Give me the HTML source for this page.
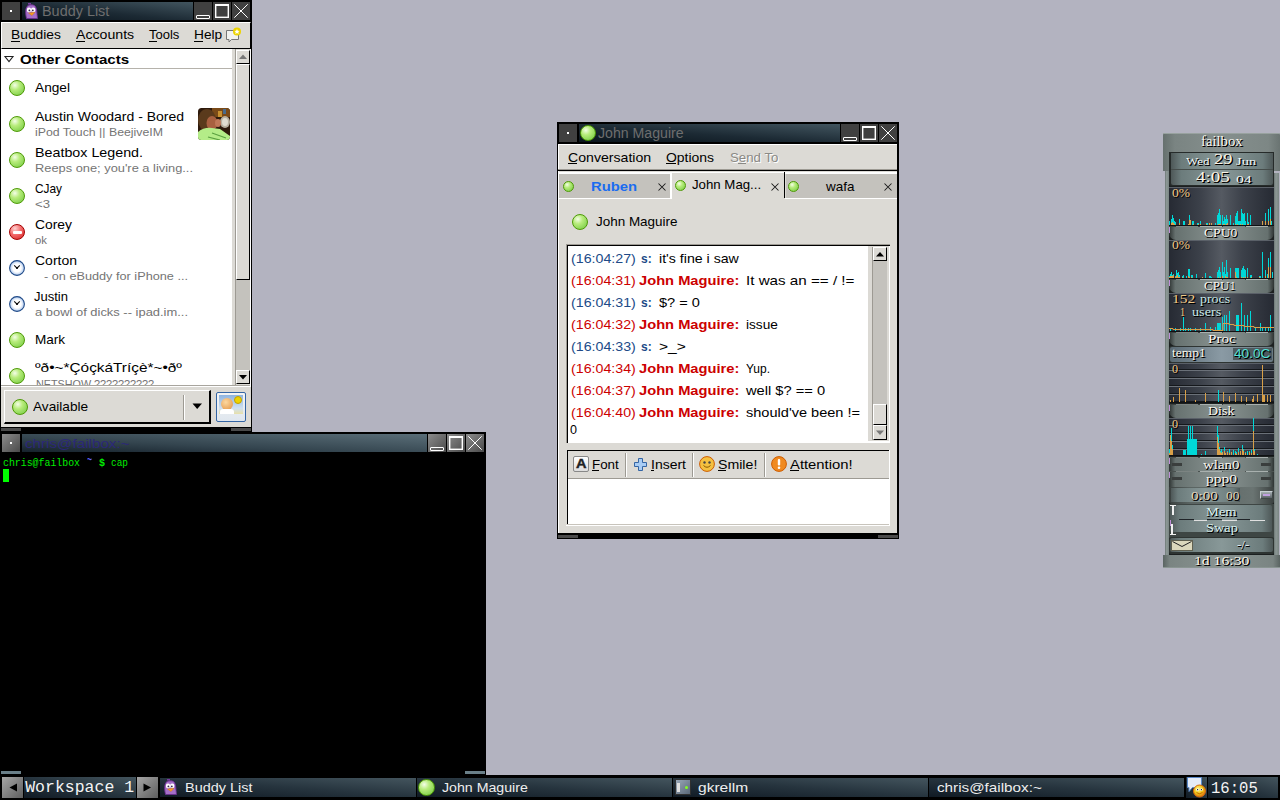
<!DOCTYPE html>
<html><head><meta charset="utf-8"><title>Desktop</title>
<style>
html,body{margin:0;padding:0;width:1280px;height:800px;overflow:hidden;background:#b3b3c0}
.r,.t{position:absolute;margin:0;padding:0}
.t{white-space:pre;transform-origin:0 0;font-family:"Liberation Sans",sans-serif}
svg.r{overflow:visible}
</style></head><body>
<div class="r" style="left:0px;top:0px;width:1280px;height:800px;background:#b3b3c0;"></div>
<div class="r" style="left:0px;top:0px;width:252px;height:432px;background:#000;"></div>
<div class="r" style="left:2px;top:2px;width:18px;height:18px;background:#404040;"></div><div class="r" style="left:10px;top:10px;width:2px;height:2px;background:#fff;"></div><div class="r" style="left:22px;top:2px;width:171px;height:18px;background:linear-gradient(to top right,#0a141c 0%,#1c2a34 45%,#42555f 100%);"></div><div class="r" style="left:194px;top:2px;width:18px;height:18px;background:#404040;"></div><div class="r" style="left:213px;top:2px;width:18px;height:18px;background:#404040;"></div><div class="r" style="left:232px;top:2px;width:18px;height:18px;background:#404040;"></div><div class="r" style="left:196px;top:15px;width:14px;height:4px;background:transparent;border:1px solid #fff;box-sizing:border-box;border-radius:1px"></div><svg class="r" style="left:213px;top:2px" width="18" height="18"><rect x="2.7" y="3" width="12.6" height="12.3" fill="none" stroke="#fff" stroke-width="1.4"/><rect x="2" y="2" width="14" height="2" fill="#fff"/></svg><svg class="r" style="left:232px;top:2px" width="18" height="18"><path d="M2.3 2.3L15.7 15.7M15.7 2.3L2.3 15.7" stroke="#fff" stroke-width="1"/></svg>
<svg class="r" style="left:24px;top:3px" width="14" height="16" viewBox="0 0 14 16"><path d="M2.5 15.5 C1.5 11 1.2 6 3 3.5 C4.5 1.5 9.5 1.2 11.3 3.3 C13 5.5 12.8 10 13.5 15.5 Z" fill="#a56fc8" stroke="#6a3090" stroke-width=".9"/><rect x="4" y="0" width="3" height="1.5" fill="#7a3aa0"/><ellipse cx="5" cy="7" rx="2.2" ry="2.4" fill="#fff"/><ellipse cx="9.2" cy="7" rx="2.2" ry="2.4" fill="#fff"/><circle cx="5.4" cy="7.4" r=".9" fill="#3a2a4a"/><circle cx="8.8" cy="7.4" r=".9" fill="#3a2a4a"/><path d="M4.5 10 L11 9.3 L8 12.5Z" fill="#f5a020" stroke="#d07000" stroke-width=".4"/></svg>
<div class="t" style="left:41.70px;top:4.15px;font:14.00px/14.00px 'Liberation Sans', sans-serif;color:#6e6e6e;transform:scale(1.0298,1.0000);">Buddy List</div>
<div class="r" style="left:1px;top:22px;width:250px;height:405px;background:#dcdad5;"></div>
<div class="r" style="left:1px;top:22px;width:250px;height:27px;background:#dcdad5;border-top:1px solid #fff;border-left:1px solid #fff;border-right:1px solid #000;border-bottom:1px solid #000;box-sizing:border-box"></div>
<div class="r" style="left:1px;top:49px;width:1px;height:378px;background:#fff;"></div>
<div class="t" style="left:11.40px;top:28.30px;font:13.00px/13.00px 'Liberation Sans', sans-serif;color:#000;transform:scale(1.0638,1.0000);">Buddies</div>
<div class="t" style="left:76.30px;top:28.30px;font:13.00px/13.00px 'Liberation Sans', sans-serif;color:#000;transform:scale(1.0870,1.0000);">Accounts</div>
<div class="t" style="left:149.00px;top:28.30px;font:13.00px/13.00px 'Liberation Sans', sans-serif;color:#000;">Tools</div>
<div class="t" style="left:194.00px;top:28.30px;font:13.00px/13.00px 'Liberation Sans', sans-serif;color:#000;transform:scale(1.0542,1.0000);">Help</div>
<div class="r" style="left:11px;top:41px;width:9px;height:1px;background:#000;"></div>
<div class="r" style="left:76px;top:41px;width:9px;height:1px;background:#000;"></div>
<div class="r" style="left:149px;top:41px;width:8px;height:1px;background:#000;"></div>
<div class="r" style="left:194px;top:41px;width:9px;height:1px;background:#000;"></div>
<svg class="r" style="left:225px;top:27px" width="17" height="16" viewBox="0 0 17 16"><path d="M1.5 3.5 h12 v9 h-7 l-2.5 2.5 v-2.5 h-2.5z" fill="#f2f2f0" stroke="#777" stroke-width="1"/><circle cx="12" cy="4.5" r="4" fill="#edd400"/><path d="M12 2 l.8 1.7 1.8.2-1.3 1.2.4 1.8-1.7-.9-1.7.9.4-1.8-1.3-1.2 1.8-.2z" fill="#fff"/></svg>
<div class="r" style="left:1px;top:49px;width:231px;height:336px;background:#fff;"></div>
<div class="r" style="left:1px;top:68px;width:231px;height:1px;background:#b5b2ab;"></div>
<svg class="r" style="left:4px;top:55px" width="10" height="8"><path d="M1 1.5 H9 L5 6.5Z" fill="none" stroke="#222" stroke-width="1.1"/></svg>
<div class="t" style="left:19.80px;top:52.50px;font:bold 13.00px/13.00px 'Liberation Sans', sans-serif;color:#000;transform:scale(1.1629,1.0000);">Other Contacts</div>
<div class="r" style="left:9px;top:80px;width:16px;height:16px;border-radius:50%;box-sizing:border-box;border:1px solid #4e9a06;background:radial-gradient(circle at 35% 30%,#f4fde8 0%,#b8ec7c 35%,#8ad554 75%,#73c23c 100%)"></div>
<div class="t" style="left:35.00px;top:81.00px;font:13.00px/13.00px 'Liberation Sans', sans-serif;color:#000;transform:scale(1.0526,1.0000);">Angel</div>
<div class="r" style="left:9px;top:116px;width:16px;height:16px;border-radius:50%;box-sizing:border-box;border:1px solid #4e9a06;background:radial-gradient(circle at 35% 30%,#f4fde8 0%,#b8ec7c 35%,#8ad554 75%,#73c23c 100%)"></div>
<div class="t" style="left:35.00px;top:109.90px;font:13.00px/13.00px 'Liberation Sans', sans-serif;color:#000;transform:scale(1.0758,1.0000);">Austin Woodard - Bored</div>
<div class="t" style="left:35.00px;top:126.69px;font:11.00px/11.00px 'Liberation Sans', sans-serif;color:#747474;transform:scale(1.1194,1.0000);">iPod Touch || BeejiveIM</div>
<div class="r" style="left:9px;top:152px;width:16px;height:16px;border-radius:50%;box-sizing:border-box;border:1px solid #4e9a06;background:radial-gradient(circle at 35% 30%,#f4fde8 0%,#b8ec7c 35%,#8ad554 75%,#73c23c 100%)"></div>
<div class="t" style="left:35.00px;top:145.60px;font:13.00px/13.00px 'Liberation Sans', sans-serif;color:#000;transform:scale(1.0987,1.0000);">Beatbox Legend.</div>
<div class="t" style="left:35.00px;top:162.69px;font:11.00px/11.00px 'Liberation Sans', sans-serif;color:#747474;transform:scale(1.1669,1.0000);">Reeps one; you&#x27;re a living...</div>
<div class="r" style="left:9px;top:188px;width:16px;height:16px;border-radius:50%;box-sizing:border-box;border:1px solid #4e9a06;background:radial-gradient(circle at 35% 30%,#f4fde8 0%,#b8ec7c 35%,#8ad554 75%,#73c23c 100%)"></div>
<div class="t" style="left:35.00px;top:182.00px;font:13.00px/13.00px 'Liberation Sans', sans-serif;color:#000;transform:scale(0.9122,1.0000);">CJay</div>
<div class="t" style="left:35.00px;top:198.69px;font:11.00px/11.00px 'Liberation Sans', sans-serif;color:#747474;transform:scale(1.1952,1.0000);">&lt;3</div>
<div class="r" style="left:9px;top:224px;width:16px;height:16px;border-radius:50%;box-sizing:border-box;border:1px solid #a40000;background:radial-gradient(circle at 35% 25%,#ffd0d0 0%,#f26a6a 45%,#e03a3a 80%,#c82020 100%)"></div>
<div class="r" style="left:12.5px;top:231px;width:9.5px;height:2.5px;background:#fff;border-radius:1px"></div>
<div class="t" style="left:35.00px;top:218.00px;font:13.00px/13.00px 'Liberation Sans', sans-serif;color:#000;transform:scale(1.0663,1.0000);">Corey</div>
<div class="t" style="left:35.00px;top:234.69px;font:11.00px/11.00px 'Liberation Sans', sans-serif;color:#747474;transform:scale(1.0300,1.0000);">ok</div>
<svg class="r" style="left:9px;top:260px" width="16" height="16"><defs><radialGradient id="cf260" cx="50%" cy="50%" r="50%"><stop offset="55%" stop-color="#fff"/><stop offset="100%" stop-color="#a8c4ec"/></radialGradient></defs><circle cx="8" cy="8" r="7.4" fill="url(#cf260)" stroke="#204a87" stroke-width="1.1"/><path d="M5.2 5.3 L8 8.2 L10.8 5.3" fill="none" stroke="#111" stroke-width="1.1"/><circle cx="8" cy="8" r="1" fill="#000"/></svg>
<div class="t" style="left:35.00px;top:253.60px;font:13.00px/13.00px 'Liberation Sans', sans-serif;color:#000;transform:scale(1.0769,1.0000);">Corton</div>
<div class="t" style="left:44.00px;top:270.69px;font:11.00px/11.00px 'Liberation Sans', sans-serif;color:#747474;transform:scale(1.1543,1.0000);">- on eBuddy for iPhone ...</div>
<svg class="r" style="left:9px;top:296px" width="16" height="16"><defs><radialGradient id="cf296" cx="50%" cy="50%" r="50%"><stop offset="55%" stop-color="#fff"/><stop offset="100%" stop-color="#a8c4ec"/></radialGradient></defs><circle cx="8" cy="8" r="7.4" fill="url(#cf296)" stroke="#204a87" stroke-width="1.1"/><path d="M5.2 5.3 L8 8.2 L10.8 5.3" fill="none" stroke="#111" stroke-width="1.1"/><circle cx="8" cy="8" r="1" fill="#000"/></svg>
<div class="t" style="left:34.00px;top:289.60px;font:13.00px/13.00px 'Liberation Sans', sans-serif;color:#000;">Justin</div>
<div class="t" style="left:35.00px;top:306.69px;font:11.00px/11.00px 'Liberation Sans', sans-serif;color:#747474;transform:scale(1.1751,1.0000);">a bowl of dicks -- ipad.im...</div>
<div class="r" style="left:9px;top:332px;width:16px;height:16px;border-radius:50%;box-sizing:border-box;border:1px solid #4e9a06;background:radial-gradient(circle at 35% 30%,#f4fde8 0%,#b8ec7c 35%,#8ad554 75%,#73c23c 100%)"></div>
<div class="t" style="left:35.00px;top:332.60px;font:13.00px/13.00px 'Liberation Sans', sans-serif;color:#000;transform:scale(1.0432,1.0000);">Mark</div>
<div class="r" style="left:9px;top:368px;width:16px;height:16px;border-radius:50%;box-sizing:border-box;border:1px solid #4e9a06;background:radial-gradient(circle at 35% 30%,#f4fde8 0%,#b8ec7c 35%,#8ad554 75%,#73c23c 100%)"></div>
<div class="t" style="left:35.00px;top:360.70px;font:13.00px/13.00px 'Liberation Sans', sans-serif;color:#000;transform:scale(1.1821,1.0000);">ºð•~*ÇóçkáTríçè*~•ðº</div>
<div class="t" style="left:35.50px;top:378.69px;font:11.00px/11.00px 'Liberation Sans', sans-serif;color:#747474;transform:scale(0.9797,1.0000);">NETSHOW ??????????</div>
<svg class="r" style="left:198px;top:108px" width="32" height="32" viewBox="0 0 32 32"><defs><clipPath id="av"><rect width="32" height="32" rx="3.5"/></clipPath></defs><g clip-path="url(#av)"><rect width="32" height="32" fill="#2e1a0c"/><rect x="14" y="0" width="18" height="9" fill="#7a4a18"/><rect x="20" y="3" width="4" height="6" fill="#c89030"/><rect x="25" y="1" width="3" height="5" fill="#4a6a8a"/><ellipse cx="27" cy="14" rx="5" ry="6" fill="#b8b0a0"/><ellipse cx="27" cy="14" rx="3" ry="4" fill="#e0dcd0"/><ellipse cx="9" cy="12" rx="9" ry="11" fill="#5a3a1c"/><ellipse cx="14" cy="15" rx="5.5" ry="7" fill="#a86040"/><ellipse cx="20" cy="15" rx="3" ry="4" fill="#c07858"/><path d="M0 24 Q6 19 14 20 L22 21 L32 28 V32 H0Z" fill="#b4ec88"/><path d="M10 29 L22 32 M14 25 L28 30" stroke="#5aa040" stroke-width="1.2"/></g></svg>
<div class="r" style="left:1px;top:385px;width:249px;height:1px;background:#a8a59e;"></div>
<div class="r" style="left:1px;top:386px;width:250px;height:1px;background:#fff;"></div>
<div class="r" style="left:1px;top:387px;width:250px;height:40px;background:#dcdad5;"></div>
<div class="r" style="left:232px;top:49px;width:18px;height:336px;background:#dcdad5;"></div>
<div class="r" style="left:235px;top:49px;width:1px;height:336px;background:#9d9a93;"></div>
<div class="r" style="left:236px;top:64px;width:14px;height:216px;background:#dcdad5;border-top:1px solid #fff;border-left:1px solid #fff;border-right:1px solid #000;border-bottom:1px solid #000;box-sizing:border-box"></div>
<div class="r" style="left:236px;top:280px;width:14px;height:90px;background:#c4c2bd;"></div>
<div class="r" style="left:236px;top:50px;width:14px;height:14px;background:#dcdad5;border-top:1px solid #fff;border-left:1px solid #fff;border-right:1px solid #000;border-bottom:1px solid #000;box-sizing:border-box"></div>
<svg class="r" style="left:238px;top:53px" width="10" height="8"><path d="M1 6 L5 1.5 L9 6Z" fill="#777"/></svg>
<div class="r" style="left:236px;top:370px;width:14px;height:14px;background:#dcdad5;border-top:1px solid #fff;border-left:1px solid #fff;border-right:1px solid #000;border-bottom:1px solid #000;box-sizing:border-box"></div>
<svg class="r" style="left:238px;top:373px" width="10" height="8"><path d="M1 2 L9 2 L5 6.5Z" fill="#000"/></svg>
<div class="r" style="left:250px;top:49px;width:1px;height:337px;background:#fff;"></div>
<div class="r" style="left:4px;top:390px;width:207px;height:34px;background:#dcdad5;border-top:1px solid #fff;border-left:1px solid #fff;border-right:2px solid #000;border-bottom:2px solid #000;box-sizing:border-box"></div>
<div class="r" style="left:12px;top:399px;width:16px;height:16px;border-radius:50%;box-sizing:border-box;border:1px solid #4e9a06;background:radial-gradient(circle at 35% 30%,#f4fde8 0%,#b8ec7c 35%,#8ad554 75%,#73c23c 100%)"></div>
<div class="t" style="left:33.20px;top:399.60px;font:13.00px/13.00px 'Liberation Sans', sans-serif;color:#000;transform:scale(1.0495,1.0000);">Available</div>
<div class="r" style="left:183px;top:395px;width:1px;height:25px;background:#9d9a93;"></div>
<div class="r" style="left:184px;top:395px;width:1px;height:25px;background:#fff;"></div>
<svg class="r" style="left:192px;top:403px" width="11" height="7"><path d="M0.5 0.5 L10 0.5 L5.2 6Z" fill="#000"/></svg>
<div class="r" style="left:216px;top:392px;width:30px;height:30px;box-sizing:border-box;border:1px solid #3465a4;border-radius:2px;background:linear-gradient(#f4f4f4,#dfe6ee)"><div class="r" style="left:2px;top:2px;width:24px;height:19px;background:linear-gradient(#8fb4e0,#cfe0f0 70%,#e8e0a8)"></div><div class="r" style="left:17px;top:3px;width:8px;height:8px;border-radius:50%;background:#edd400;border:1px solid #c4a000;box-sizing:border-box"></div><div class="r" style="left:4px;top:5px;width:12px;height:12px;border-radius:50%;background:radial-gradient(circle at 40% 35%,#fcd8a0,#e09040)"></div><div class="r" style="left:3px;top:16px;width:14px;height:5px;background:#fff;border-radius:3px 3px 0 0"></div></div>
<div class="r" style="left:1px;top:428px;width:20px;height:3px;background:#4a4a4a;"></div>
<div class="r" style="left:231px;top:428px;width:20px;height:3px;background:#4a4a4a;"></div>
<div class="r" style="left:0px;top:432px;width:486px;height:343px;background:#000;"></div>
<div class="r" style="left:2px;top:434px;width:18px;height:18px;background:linear-gradient(135deg,#8c8c8c,#4a4a4a);"></div><div class="r" style="left:10px;top:442px;width:2px;height:2px;background:#fff;"></div><div class="r" style="left:22px;top:434px;width:405px;height:18px;background:linear-gradient(to top right,#16222c 0%,#34454f 40%,#5a6e78 100%);"></div><div class="r" style="left:428px;top:434px;width:18px;height:18px;background:linear-gradient(135deg,#8c8c8c,#4a4a4a);"></div><div class="r" style="left:447px;top:434px;width:18px;height:18px;background:linear-gradient(135deg,#8c8c8c,#4a4a4a);"></div><div class="r" style="left:466px;top:434px;width:18px;height:18px;background:linear-gradient(135deg,#8c8c8c,#4a4a4a);"></div><div class="r" style="left:430px;top:447px;width:14px;height:4px;background:transparent;border:1px solid #fff;box-sizing:border-box;border-radius:1px"></div><svg class="r" style="left:447px;top:434px" width="18" height="18"><rect x="2.7" y="3" width="12.6" height="12.3" fill="none" stroke="#fff" stroke-width="1.4"/><rect x="2" y="2" width="14" height="2" fill="#fff"/></svg><svg class="r" style="left:466px;top:434px" width="18" height="18"><path d="M2.3 2.3L15.7 15.7M15.7 2.3L2.3 15.7" stroke="#fff" stroke-width="1"/></svg>
<div class="t" style="left:24.60px;top:436.80px;font:13.00px/13.00px 'Liberation Sans', sans-serif;color:#2c2878;transform:scale(1.1694,1.0000);">chris@failbox:~</div>
<div class="t" style="left:3.00px;top:458.94px;font:10.00px/10.00px 'Liberation Mono', monospace;color:#00ee00;transform:scale(0.9872,1.0000);">chris@failbox</div>
<div class="t" style="left:87.00px;top:455.83px;font:bold 10.00px/10.00px 'Liberation Mono', monospace;color:#6666ff;transform:scale(0.8333,1.0000);">~</div>
<div class="t" style="left:99.00px;top:458.94px;font:bold 10.00px/10.00px 'Liberation Mono', monospace;color:#00ee00;">$</div>
<div class="t" style="left:111.00px;top:458.94px;font:10.00px/10.00px 'Liberation Mono', monospace;color:#00ee00;transform:scale(0.9444,1.0000);">cap</div>
<div class="r" style="left:3px;top:469px;width:6px;height:13px;background:#00ff00;"></div>
<div class="r" style="left:1px;top:771px;width:20px;height:3px;background:#6a7f88;"></div>
<div class="r" style="left:465px;top:771px;width:20px;height:3px;background:#6a7f88;"></div>
<div class="r" style="left:557px;top:122px;width:342px;height:417px;background:#000;"></div>
<div class="r" style="left:559px;top:124px;width:18px;height:18px;background:#404040;"></div><div class="r" style="left:567px;top:132px;width:2px;height:2px;background:#fff;"></div><div class="r" style="left:579px;top:124px;width:261px;height:18px;background:linear-gradient(to top right,#0a141c 0%,#1c2a34 45%,#42555f 100%);"></div><div class="r" style="left:841px;top:124px;width:18px;height:18px;background:#404040;"></div><div class="r" style="left:860px;top:124px;width:18px;height:18px;background:#404040;"></div><div class="r" style="left:879px;top:124px;width:18px;height:18px;background:#404040;"></div><div class="r" style="left:843px;top:137px;width:14px;height:4px;background:transparent;border:1px solid #fff;box-sizing:border-box;border-radius:1px"></div><svg class="r" style="left:860px;top:124px" width="18" height="18"><rect x="2.7" y="3" width="12.6" height="12.3" fill="none" stroke="#fff" stroke-width="1.4"/><rect x="2" y="2" width="14" height="2" fill="#fff"/></svg><svg class="r" style="left:879px;top:124px" width="18" height="18"><path d="M2.3 2.3L15.7 15.7M15.7 2.3L2.3 15.7" stroke="#fff" stroke-width="1"/></svg>
<div class="r" style="left:580px;top:125px;width:16px;height:16px;border-radius:50%;box-sizing:border-box;border:1px solid #4e9a06;background:radial-gradient(circle at 35% 30%,#f4fde8 0%,#b8ec7c 35%,#8ad554 75%,#73c23c 100%)"></div>
<div class="t" style="left:597.80px;top:126.15px;font:14.00px/14.00px 'Liberation Sans', sans-serif;color:#6e6e6e;transform:scale(1.0088,1.0000);">John Maguire</div>
<div class="r" style="left:558px;top:144px;width:339px;height:389px;background:#dcdad5;"></div>
<div class="r" style="left:558px;top:144px;width:339px;height:1px;background:#fff;"></div>
<div class="r" style="left:558px;top:144px;width:1px;height:389px;background:#fff;"></div>
<div class="t" style="left:568.30px;top:151.00px;font:13.00px/13.00px 'Liberation Sans', sans-serif;color:#000;transform:scale(1.0862,1.0000);">Conversation</div>
<div class="t" style="left:666.40px;top:151.00px;font:13.00px/13.00px 'Liberation Sans', sans-serif;color:#000;transform:scale(1.0737,1.0000);">Options</div>
<div class="t" style="left:730.60px;top:152.00px;font:13.00px/13.00px 'Liberation Sans', sans-serif;color:#fff;transform:scale(1.0200,1.0000);">Send To</div>
<div class="t" style="left:729.60px;top:151.00px;font:13.00px/13.00px 'Liberation Sans', sans-serif;color:#8a8985;transform:scale(1.0200,1.0000);">Send To</div>
<div class="r" style="left:568px;top:163px;width:9px;height:1px;background:#000;"></div>
<div class="r" style="left:666px;top:163px;width:10px;height:1px;background:#000;"></div>
<div class="r" style="left:738px;top:163px;width:8px;height:1px;background:#8a8985;"></div>
<div class="r" style="left:558px;top:169px;width:339px;height:1px;background:#9d9a93;"></div>
<div class="r" style="left:558px;top:170px;width:339px;height:1px;background:#000;"></div>
<div class="r" style="left:559px;top:172px;width:338px;height:2px;background:#fff;"></div>
<div class="r" style="left:559px;top:174px;width:111px;height:24px;background:#c4c2bd;"></div>
<div class="r" style="left:786px;top:174px;width:111px;height:24px;background:#c4c2bd;"></div>
<div class="r" style="left:559px;top:198px;width:112px;height:1px;background:#fff;"></div>
<div class="r" style="left:785px;top:198px;width:112px;height:1px;background:#fff;"></div>
<div class="r" style="left:671px;top:172px;width:113px;height:27px;background:#dcdad5;border-top:1px solid #fff;border-left:1px solid #fff;box-sizing:border-box"></div>
<div class="r" style="left:784px;top:172px;width:1px;height:26px;background:#000;"></div>
<div class="r" style="left:670px;top:174px;width:1px;height:24px;background:#fff;"></div>
<div class="r" style="left:563px;top:181px;width:11px;height:11px;border-radius:50%;box-sizing:border-box;border:1px solid #4e9a06;background:radial-gradient(circle at 35% 30%,#f4fde8 0%,#b8ec7c 35%,#8ad554 75%,#73c23c 100%)"></div>
<div class="r" style="left:675px;top:180px;width:11px;height:11px;border-radius:50%;box-sizing:border-box;border:1px solid #4e9a06;background:radial-gradient(circle at 35% 30%,#f4fde8 0%,#b8ec7c 35%,#8ad554 75%,#73c23c 100%)"></div>
<div class="r" style="left:788px;top:181px;width:11px;height:11px;border-radius:50%;box-sizing:border-box;border:1px solid #4e9a06;background:radial-gradient(circle at 35% 30%,#f4fde8 0%,#b8ec7c 35%,#8ad554 75%,#73c23c 100%)"></div>
<div class="t" style="left:591.30px;top:180.20px;font:bold 13.00px/13.00px 'Liberation Sans', sans-serif;color:#1a6cf0;transform:scale(1.1397,1.0000);">Ruben</div>
<div class="t" style="left:691.90px;top:178.40px;font:13.00px/13.00px 'Liberation Sans', sans-serif;color:#000;transform:scale(1.0177,1.0000);">John Mag...</div>
<div class="t" style="left:826.05px;top:179.80px;font:13.00px/13.00px 'Liberation Sans', sans-serif;color:#000;transform:scale(1.0345,1.0000);">wafa</div>
<svg class="r" style="left:657.5px;top:183.0px" width="8" height="8"><path d="M.5 .5 L7.5 7.5 M7.5 .5 L.5 7.5" stroke="#1a1a1a" stroke-width="1.05"/></svg>
<svg class="r" style="left:770.6px;top:182.5px" width="8" height="8"><path d="M.5 .5 L7.5 7.5 M7.5 .5 L.5 7.5" stroke="#1a1a1a" stroke-width="1.05"/></svg>
<svg class="r" style="left:883.6px;top:183.0px" width="8" height="8"><path d="M.5 .5 L7.5 7.5 M7.5 .5 L.5 7.5" stroke="#1a1a1a" stroke-width="1.05"/></svg>
<div class="r" style="left:572px;top:214px;width:16px;height:16px;border-radius:50%;box-sizing:border-box;border:1px solid #4e9a06;background:radial-gradient(circle at 35% 30%,#f4fde8 0%,#b8ec7c 35%,#8ad554 75%,#73c23c 100%)"></div>
<div class="t" style="left:595.80px;top:214.80px;font:13.00px/13.00px 'Liberation Sans', sans-serif;color:#000;transform:scale(1.0349,1.0000);">John Maguire</div>
<div class="r" style="left:566px;top:244px;width:324px;height:199px;background:#9d9a93;"></div>
<div class="r" style="left:567px;top:245px;width:323px;height:198px;background:#000;"></div>
<div class="r" style="left:568px;top:246px;width:322px;height:197px;background:#fff;"></div>
<div class="r" style="left:868px;top:246px;width:1px;height:195px;background:#dcdad5;"></div>
<div class="r" style="left:869px;top:246px;width:20px;height:195px;background:#dcdad5;"></div>
<div class="r" style="left:872px;top:247px;width:1px;height:193px;background:#9d9a93;"></div>
<div class="r" style="left:873px;top:261px;width:14px;height:143px;background:#c4c2bd;"></div>
<div class="r" style="left:873px;top:247px;width:14px;height:14px;background:#dcdad5;border-top:1px solid #fff;border-left:1px solid #fff;border-right:1px solid #000;border-bottom:1px solid #000;box-sizing:border-box"></div>
<svg class="r" style="left:875px;top:250px" width="10" height="8"><path d="M1 6.5 L5 2 L9 6.5Z" fill="#000"/></svg>
<div class="r" style="left:873px;top:404px;width:14px;height:21px;background:#dcdad5;border-top:1px solid #fff;border-left:1px solid #fff;border-right:1px solid #000;border-bottom:1px solid #000;box-sizing:border-box"></div>
<div class="r" style="left:873px;top:425px;width:14px;height:15px;background:#dcdad5;border-top:1px solid #fff;border-left:1px solid #fff;border-right:1px solid #000;border-bottom:1px solid #000;box-sizing:border-box"></div>
<svg class="r" style="left:875px;top:429px" width="10" height="8"><path d="M1 1.5 L9 1.5 L5 6Z" fill="#777"/></svg>
<div class="t" style="left:570.60px;top:252.00px;font:13.00px/13.00px 'Liberation Sans', sans-serif;color:#204a87;transform:scale(1.0937,1.0000);">(16:04:27)</div>
<div class="t" style="left:640.90px;top:252.00px;font:bold 13.00px/13.00px 'Liberation Sans', sans-serif;color:#204a87;transform:scale(0.9264,1.0000);">s:</div>
<div class="t" style="left:658.50px;top:252.00px;font:13.00px/13.00px 'Liberation Sans', sans-serif;color:#000;transform:scale(1.0893,1.0000);">it&#x27;s fine i saw</div>
<div class="t" style="left:570.60px;top:274.00px;font:13.00px/13.00px 'Liberation Sans', sans-serif;color:#cc0000;transform:scale(1.0937,1.0000);">(16:04:31)</div>
<div class="t" style="left:639.40px;top:274.00px;font:bold 13.00px/13.00px 'Liberation Sans', sans-serif;color:#cc0000;transform:scale(1.1289,1.0000);">John Maguire:</div>
<div class="t" style="left:746.30px;top:274.00px;font:13.00px/13.00px 'Liberation Sans', sans-serif;color:#000;transform:scale(1.1675,1.0000);">It was an == / !=</div>
<div class="t" style="left:570.60px;top:296.00px;font:13.00px/13.00px 'Liberation Sans', sans-serif;color:#204a87;transform:scale(1.0937,1.0000);">(16:04:31)</div>
<div class="t" style="left:640.90px;top:296.00px;font:bold 13.00px/13.00px 'Liberation Sans', sans-serif;color:#204a87;transform:scale(0.9264,1.0000);">s:</div>
<div class="t" style="left:658.50px;top:296.00px;font:13.00px/13.00px 'Liberation Sans', sans-serif;color:#000;transform:scale(1.1205,1.0000);">$? = 0</div>
<div class="t" style="left:570.60px;top:318.00px;font:13.00px/13.00px 'Liberation Sans', sans-serif;color:#cc0000;transform:scale(1.0937,1.0000);">(16:04:32)</div>
<div class="t" style="left:639.40px;top:318.00px;font:bold 13.00px/13.00px 'Liberation Sans', sans-serif;color:#cc0000;transform:scale(1.1289,1.0000);">John Maguire:</div>
<div class="t" style="left:746.30px;top:318.00px;font:13.00px/13.00px 'Liberation Sans', sans-serif;color:#000;transform:scale(1.0511,1.0000);">issue</div>
<div class="t" style="left:570.60px;top:340.00px;font:13.00px/13.00px 'Liberation Sans', sans-serif;color:#204a87;transform:scale(1.0937,1.0000);">(16:04:33)</div>
<div class="t" style="left:640.90px;top:340.00px;font:bold 13.00px/13.00px 'Liberation Sans', sans-serif;color:#204a87;transform:scale(0.9264,1.0000);">s:</div>
<div class="t" style="left:658.50px;top:340.00px;font:13.00px/13.00px 'Liberation Sans', sans-serif;color:#000;transform:scale(1.1964,1.0000);">&gt;_&gt;</div>
<div class="t" style="left:570.60px;top:362.00px;font:13.00px/13.00px 'Liberation Sans', sans-serif;color:#cc0000;transform:scale(1.0937,1.0000);">(16:04:34)</div>
<div class="t" style="left:639.40px;top:362.00px;font:bold 13.00px/13.00px 'Liberation Sans', sans-serif;color:#cc0000;transform:scale(1.1289,1.0000);">John Maguire:</div>
<div class="t" style="left:746.30px;top:362.00px;font:13.00px/13.00px 'Liberation Sans', sans-serif;color:#000;transform:scale(0.9213,1.0000);">Yup.</div>
<div class="t" style="left:570.60px;top:384.00px;font:13.00px/13.00px 'Liberation Sans', sans-serif;color:#cc0000;transform:scale(1.0937,1.0000);">(16:04:37)</div>
<div class="t" style="left:639.40px;top:384.00px;font:bold 13.00px/13.00px 'Liberation Sans', sans-serif;color:#cc0000;transform:scale(1.1289,1.0000);">John Maguire:</div>
<div class="t" style="left:746.36px;top:384.00px;font:13.00px/13.00px 'Liberation Sans', sans-serif;color:#000;transform:scale(1.1290,1.0000);">well $? == 0</div>
<div class="t" style="left:570.60px;top:406.00px;font:13.00px/13.00px 'Liberation Sans', sans-serif;color:#cc0000;transform:scale(1.0937,1.0000);">(16:04:40)</div>
<div class="t" style="left:639.40px;top:406.00px;font:bold 13.00px/13.00px 'Liberation Sans', sans-serif;color:#cc0000;transform:scale(1.1289,1.0000);">John Maguire:</div>
<div class="t" style="left:746.30px;top:406.00px;font:13.00px/13.00px 'Liberation Sans', sans-serif;color:#000;transform:scale(1.1193,1.0000);">should&#x27;ve been !=</div>
<div class="t" style="left:570.00px;top:423.00px;font:13.00px/13.00px 'Liberation Sans', sans-serif;color:#000;transform:scale(0.9655,1.0000);">0</div>
<div class="r" style="left:567px;top:450px;width:322px;height:75px;background:#000;"></div>
<div class="r" style="left:568px;top:451px;width:321px;height:27px;background:#dcdad5;"></div>
<div class="r" style="left:568px;top:478px;width:321px;height:1px;background:#9d9a93;"></div>
<div class="r" style="left:568px;top:479px;width:321px;height:45px;background:#fff;"></div>
<div class="r" style="left:889px;top:450px;width:1px;height:75px;background:#fff;"></div>
<div class="r" style="left:566px;top:525px;width:324px;height:1px;background:#fff;"></div>
<div class="r" style="left:567px;top:524px;width:322px;height:1px;background:#c8c4bc;"></div>
<div class="r" style="left:625px;top:453px;width:1px;height:24px;background:#9d9a93;"></div>
<div class="r" style="left:626px;top:453px;width:1px;height:24px;background:#fff;"></div>
<div class="r" style="left:692px;top:453px;width:1px;height:24px;background:#9d9a93;"></div>
<div class="r" style="left:693px;top:453px;width:1px;height:24px;background:#fff;"></div>
<div class="r" style="left:764px;top:453px;width:1px;height:24px;background:#9d9a93;"></div>
<div class="r" style="left:765px;top:453px;width:1px;height:24px;background:#fff;"></div>
<div class="r" style="left:573px;top:456px;width:16px;height:16px;box-sizing:border-box;border:1px solid #888;border-radius:2px;background:linear-gradient(#fff,#ddd)"></div>
<div class="t" style="left:575.50px;top:458.42px;font:bold 12.50px/12.50px 'Liberation Sans', sans-serif;color:#1e2224;transform:scale(1.1602,1.0000);-webkit-text-stroke:0.4px #1e2224;">A</div>
<div class="t" style="left:592.30px;top:458.00px;font:13.00px/13.00px 'Liberation Sans', sans-serif;color:#000;transform:scale(1.0269,1.0000);">Font</div>
<div class="r" style="left:592px;top:470px;width:7px;height:1px;background:#000;"></div>
<svg class="r" style="left:634px;top:458px" width="13" height="13"><path d="M4.5 .5h4v4h4v4h-4v4h-4v-4h-4v-4h4z" fill="#a8ccf4" stroke="#3465a4" stroke-width="1"/></svg>
<div class="t" style="left:651.00px;top:458.00px;font:13.00px/13.00px 'Liberation Sans', sans-serif;color:#000;transform:scale(1.0769,1.0000);">Insert</div>
<div class="r" style="left:651px;top:470px;width:3px;height:1px;background:#000;"></div>
<svg class="r" style="left:699px;top:456px" width="16" height="16"><circle cx="8" cy="8" r="7.4" fill="#f4c040" stroke="#ce5c00" stroke-width="1"/><circle cx="5.5" cy="6.5" r="1.2" fill="#444"/><circle cx="10.5" cy="6.5" r="1.2" fill="#444"/><path d="M4.5 9.5 Q8 13 11.5 9.5" fill="none" stroke="#8a5a00" stroke-width="1"/></svg>
<div class="t" style="left:718.20px;top:458.00px;font:13.00px/13.00px 'Liberation Sans', sans-serif;color:#000;transform:scale(1.0886,1.0000);">Smile!</div>
<div class="r" style="left:718px;top:470px;width:8px;height:1px;background:#000;"></div>
<svg class="r" style="left:771px;top:456px" width="16" height="16"><circle cx="8" cy="8" r="7.4" fill="#f08a20" stroke="#ce5c00" stroke-width="1"/><rect x="6.8" y="3" width="2.4" height="6.5" rx="1" fill="#fff"/><circle cx="8" cy="11.8" r="1.3" fill="#fff"/></svg>
<div class="t" style="left:790.00px;top:458.00px;font:13.00px/13.00px 'Liberation Sans', sans-serif;color:#000;transform:scale(1.1392,1.0000);">Attention!</div>
<div class="r" style="left:790px;top:470px;width:9px;height:1px;background:#000;"></div>
<div class="r" style="left:558px;top:533px;width:341px;height:6px;background:#000;"></div>
<div class="r" style="left:558px;top:535px;width:20px;height:3px;background:#4a4a4a;"></div>
<div class="r" style="left:878px;top:535px;width:20px;height:3px;background:#4a4a4a;"></div>
<div class="r" style="left:1169px;top:152px;width:105px;height:404px;background:#1c2020;"></div>
<div class="r" style="left:1165px;top:170px;width:4px;height:386px;background:linear-gradient(90deg,#6d7876 0%,#8d9896 40%,#7a8583 100%);"></div>
<div class="r" style="left:1274px;top:173px;width:5px;height:383px;background:linear-gradient(90deg,#6d7876 0%,#8d9896 40%,#7a8583 100%);"></div>
<div class="r" style="left:1163px;top:133px;width:117px;height:38px;background:linear-gradient(90deg,#66706e 0%,#7a8482 10%,#858f8d 50%,#7d8785 90%,#6a7472 100%);border-radius:2px 2px 0 0"></div>
<div class="r" style="left:1163px;top:133px;width:117px;height:1px;background:#98a29f;"></div>
<div class="t" style="left:1201.00px;top:134.78px;font:14.00px/14.00px 'Liberation Serif', serif;color:#fcfaf4;transform:scale(1.0517,1.0000);text-shadow:1px 1px 0 #000,0.5px 0.5px 0 #000;">failbox</div>
<div class="r" style="left:1169px;top:152px;width:105px;height:34px;background:#262b2a;border-radius:0 0 3px 3px"></div>
<div class="r" style="left:1171px;top:153px;width:102px;height:16px;background:linear-gradient(90deg,#4e5858 0%,#6c7c7c 10%,#889898 50%,#6c7c7c 90%,#4e5858 100%);"></div>
<div class="r" style="left:1171px;top:170px;width:102px;height:15px;background:linear-gradient(90deg,#4e5858 0%,#6c7c7c 10%,#889898 50%,#6c7c7c 90%,#4e5858 100%);border-radius:0 0 2px 2px"></div>
<div class="r" style="left:1171px;top:169px;width:102px;height:1px;background:#454c4a;"></div>
<div class="t" style="left:1186.00px;top:155.69px;font:11.00px/11.00px 'Liberation Serif', serif;color:#f4fafa;transform:scale(1.1809,1.0000);text-shadow:1px 1px 0 #000,0.5px 0.5px 0 #000;">Wed</div>
<div class="t" style="left:1214.00px;top:152.44px;font:15.00px/15.00px 'Liberation Serif', serif;color:#fcf6e8;transform:scale(1.2267,1.0000);text-shadow:1px 1px 0 #000,0.5px 0.5px 0 #000;">29</div>
<div class="t" style="left:1236.40px;top:155.69px;font:11.00px/11.00px 'Liberation Serif', serif;color:#f4fafa;transform:scale(1.3203,1.0000);text-shadow:1px 1px 0 #000,0.5px 0.5px 0 #000;">Jun</div>
<div class="t" style="left:1196.00px;top:170.34px;font:15.00px/15.00px 'Liberation Serif', serif;color:#fcf6e8;transform:scale(1.2645,1.0000);text-shadow:1px 1px 0 #000,0.5px 0.5px 0 #000;">4:05</div>
<div class="t" style="left:1236.00px;top:173.69px;font:11.00px/11.00px 'Liberation Serif', serif;color:#f4fafa;transform:scale(1.4273,1.0000);text-shadow:1px 1px 0 #000,0.5px 0.5px 0 #000;">04</div>
<div class="r" style="left:1169px;top:187px;width:105px;height:39px;background:linear-gradient(90deg,#262a33 0%,#3c414a 30%,#555a62 50%,#3c414a 70%,#262a33 100%);overflow:hidden"><svg class="r" style="left:0;top:0" width="105" height="39"><rect x="0" y="0" width="105" height="1" fill="#5a6068"/><rect x="0" y="34" width="1" height="4" fill="#00d8d8"/><rect x="2" y="32" width="1" height="6" fill="#00d8d8"/><rect x="2" y="36" width="1" height="2" fill="#d8a048"/><rect x="3" y="28" width="1" height="10" fill="#00d8d8"/><rect x="3" y="35" width="1" height="3" fill="#d8a048"/><rect x="4" y="31" width="1" height="7" fill="#00d8d8"/><rect x="4" y="36" width="1" height="2" fill="#d8a048"/><rect x="5" y="34" width="1" height="4" fill="#00d8d8"/><rect x="5" y="37" width="1" height="1" fill="#d8a048"/><rect x="6" y="35" width="1" height="3" fill="#00d8d8"/><rect x="10" y="32" width="1" height="6" fill="#00d8d8"/><rect x="10" y="36" width="1" height="2" fill="#d8a048"/><rect x="14" y="34" width="1" height="4" fill="#00d8d8"/><rect x="15" y="34" width="1" height="4" fill="#00d8d8"/><rect x="19" y="37" width="1" height="1" fill="#00d8d8"/><rect x="19" y="37" width="1" height="1" fill="#d8a048"/><rect x="20" y="28" width="1" height="10" fill="#00d8d8"/><rect x="20" y="33" width="1" height="5" fill="#d8a048"/><rect x="21" y="33" width="1" height="5" fill="#00d8d8"/><rect x="21" y="33" width="1" height="5" fill="#d8a048"/><rect x="23" y="34" width="1" height="4" fill="#00d8d8"/><rect x="24" y="34" width="1" height="4" fill="#00d8d8"/><rect x="24" y="37" width="1" height="1" fill="#d8a048"/><rect x="28" y="36" width="1" height="2" fill="#00d8d8"/><rect x="29" y="36" width="1" height="2" fill="#00d8d8"/><rect x="29" y="37" width="1" height="1" fill="#d8a048"/><rect x="31" y="34" width="1" height="4" fill="#00d8d8"/><rect x="31" y="37" width="1" height="1" fill="#d8a048"/><rect x="37" y="36" width="1" height="2" fill="#00d8d8"/><rect x="37" y="37" width="1" height="1" fill="#d8a048"/><rect x="38" y="36" width="1" height="2" fill="#00d8d8"/><rect x="40" y="36" width="1" height="2" fill="#00d8d8"/><rect x="40" y="36" width="1" height="2" fill="#d8a048"/><rect x="42" y="36" width="1" height="2" fill="#00d8d8"/><rect x="42" y="36" width="1" height="2" fill="#d8a048"/><rect x="46" y="36" width="1" height="2" fill="#00d8d8"/><rect x="48" y="28" width="1" height="10" fill="#00d8d8"/><rect x="49" y="26" width="1" height="12" fill="#00d8d8"/><rect x="49" y="37" width="1" height="1" fill="#d8a048"/><rect x="50" y="22" width="1" height="16" fill="#00d8d8"/><rect x="50" y="37" width="1" height="1" fill="#d8a048"/><rect x="51" y="28" width="1" height="10" fill="#00d8d8"/><rect x="51" y="37" width="1" height="1" fill="#d8a048"/><rect x="53" y="28" width="1" height="10" fill="#00d8d8"/><rect x="54" y="34" width="1" height="4" fill="#00d8d8"/><rect x="54" y="37" width="1" height="1" fill="#d8a048"/><rect x="55" y="30" width="1" height="8" fill="#00d8d8"/><rect x="55" y="37" width="1" height="1" fill="#d8a048"/><rect x="56" y="32" width="1" height="6" fill="#00d8d8"/><rect x="57" y="28" width="1" height="10" fill="#00d8d8"/><rect x="57" y="37" width="1" height="1" fill="#d8a048"/><rect x="58" y="32" width="1" height="6" fill="#00d8d8"/><rect x="58" y="36" width="1" height="2" fill="#d8a048"/><rect x="61" y="28" width="1" height="10" fill="#00d8d8"/><rect x="64" y="36" width="1" height="2" fill="#00d8d8"/><rect x="66" y="29" width="1" height="9" fill="#00d8d8"/><rect x="66" y="37" width="1" height="1" fill="#d8a048"/><rect x="67" y="26" width="1" height="12" fill="#00d8d8"/><rect x="68" y="24" width="1" height="14" fill="#00d8d8"/><rect x="68" y="37" width="1" height="1" fill="#d8a048"/><rect x="69" y="34" width="1" height="4" fill="#00d8d8"/><rect x="70" y="34" width="1" height="4" fill="#00d8d8"/><rect x="71" y="34" width="1" height="4" fill="#00d8d8"/><rect x="71" y="37" width="1" height="1" fill="#d8a048"/><rect x="72" y="22" width="1" height="16" fill="#00d8d8"/><rect x="73" y="26" width="1" height="12" fill="#00d8d8"/><rect x="73" y="37" width="1" height="1" fill="#d8a048"/><rect x="74" y="27" width="1" height="11" fill="#00d8d8"/><rect x="75" y="26" width="1" height="12" fill="#00d8d8"/><rect x="76" y="34" width="1" height="4" fill="#00d8d8"/><rect x="78" y="26" width="1" height="12" fill="#00d8d8"/><rect x="78" y="37" width="1" height="1" fill="#d8a048"/><rect x="79" y="35" width="1" height="3" fill="#00d8d8"/><rect x="79" y="37" width="1" height="1" fill="#d8a048"/><rect x="81" y="28" width="1" height="10" fill="#00d8d8"/><rect x="93" y="34" width="1" height="4" fill="#00d8d8"/><rect x="93" y="34" width="1" height="4" fill="#d8a048"/><rect x="96" y="26" width="1" height="12" fill="#00d8d8"/><rect x="96" y="34" width="1" height="4" fill="#d8a048"/><rect x="99" y="22" width="1" height="16" fill="#00d8d8"/><rect x="99" y="34" width="1" height="4" fill="#d8a048"/><rect x="101" y="20" width="1" height="18" fill="#00d8d8"/><rect x="101" y="32" width="1" height="6" fill="#d8a048"/><rect x="102" y="34" width="1" height="4" fill="#00d8d8"/><rect x="0" y="38" width="105" height="1" fill="#101214"/></svg></div>
<div class="r" style="left:1169px;top:226px;width:105px;height:14px;background:#1c2020;"></div><div class="r" style="left:1169px;top:226px;width:105px;height:14px;background:linear-gradient(90deg,#2e3433 0%,#66716f 6%,#8a9492 50%,#66716f 94%,#2e3433 100%);border-radius:0 0 7px 7px"></div><div class="r" style="left:1169px;top:226px;width:105px;height:1px;background:#3c4240;"></div><div class="r" style="left:1176px;top:226px;width:22px;height:1px;background:#7c8482;"></div><div class="r" style="left:1200px;top:226px;width:22px;height:1px;background:#a8b0ae;"></div><div class="r" style="left:1223px;top:226px;width:22px;height:1px;background:#7c8482;"></div><div class="r" style="left:1246px;top:226px;width:22px;height:1px;background:#a8b0ae;"></div><div class="r" style="left:1169px;top:227px;width:1px;height:6px;background:#c090d8;"></div>
<div class="t" style="left:1204.40px;top:225.99px;font:13.50px/13.50px 'Liberation Serif', serif;color:#fcfaf4;transform:scale(1.0091,1.0000);text-shadow:1px 1px 0 #000,0.5px 0.5px 0 #000;">CPU0</div>
<div class="t" style="left:1172.00px;top:186.53px;font:12.50px/12.50px 'Liberation Serif', serif;color:#f0c888;transform:scale(1.0811,1.0000);text-shadow:1px 1px 0 #000;">0%</div>
<div class="r" style="left:1169px;top:240px;width:105px;height:39px;background:linear-gradient(90deg,#262a33 0%,#3c414a 30%,#555a62 50%,#3c414a 70%,#262a33 100%);overflow:hidden"><svg class="r" style="left:0;top:0" width="105" height="39"><rect x="0" y="0" width="105" height="1" fill="#5a6068"/><rect x="0" y="36" width="1" height="2" fill="#00d8d8"/><rect x="0" y="37" width="1" height="1" fill="#d8a048"/><rect x="1" y="34" width="1" height="4" fill="#00d8d8"/><rect x="1" y="36" width="1" height="2" fill="#d8a048"/><rect x="2" y="32" width="1" height="6" fill="#00d8d8"/><rect x="2" y="36" width="1" height="2" fill="#d8a048"/><rect x="3" y="35" width="1" height="3" fill="#00d8d8"/><rect x="3" y="36" width="1" height="2" fill="#d8a048"/><rect x="4" y="34" width="1" height="4" fill="#00d8d8"/><rect x="4" y="35" width="1" height="3" fill="#d8a048"/><rect x="6" y="36" width="1" height="2" fill="#00d8d8"/><rect x="6" y="37" width="1" height="1" fill="#d8a048"/><rect x="7" y="30" width="1" height="8" fill="#00d8d8"/><rect x="7" y="36" width="1" height="2" fill="#d8a048"/><rect x="8" y="33" width="1" height="5" fill="#00d8d8"/><rect x="8" y="35" width="1" height="3" fill="#d8a048"/><rect x="9" y="32" width="1" height="6" fill="#00d8d8"/><rect x="9" y="37" width="1" height="1" fill="#d8a048"/><rect x="10" y="35" width="1" height="3" fill="#00d8d8"/><rect x="10" y="37" width="1" height="1" fill="#d8a048"/><rect x="13" y="36" width="1" height="2" fill="#00d8d8"/><rect x="13" y="37" width="1" height="1" fill="#d8a048"/><rect x="14" y="35" width="1" height="3" fill="#00d8d8"/><rect x="17" y="36" width="1" height="2" fill="#00d8d8"/><rect x="19" y="29" width="1" height="9" fill="#00d8d8"/><rect x="19" y="36" width="1" height="2" fill="#d8a048"/><rect x="20" y="29" width="1" height="9" fill="#00d8d8"/><rect x="20" y="37" width="1" height="1" fill="#d8a048"/><rect x="22" y="35" width="1" height="3" fill="#00d8d8"/><rect x="22" y="37" width="1" height="1" fill="#d8a048"/><rect x="23" y="35" width="1" height="3" fill="#00d8d8"/><rect x="27" y="34" width="1" height="4" fill="#00d8d8"/><rect x="33" y="37" width="1" height="1" fill="#00d8d8"/><rect x="33" y="37" width="1" height="1" fill="#d8a048"/><rect x="36" y="33" width="1" height="5" fill="#00d8d8"/><rect x="40" y="36" width="1" height="2" fill="#00d8d8"/><rect x="41" y="36" width="1" height="2" fill="#00d8d8"/><rect x="42" y="37" width="1" height="1" fill="#00d8d8"/><rect x="48" y="32" width="1" height="6" fill="#00d8d8"/><rect x="49" y="30" width="1" height="8" fill="#00d8d8"/><rect x="49" y="37" width="1" height="1" fill="#d8a048"/><rect x="50" y="27" width="1" height="11" fill="#00d8d8"/><rect x="51" y="32" width="1" height="6" fill="#00d8d8"/><rect x="51" y="37" width="1" height="1" fill="#d8a048"/><rect x="53" y="22" width="1" height="16" fill="#00d8d8"/><rect x="53" y="36" width="1" height="2" fill="#d8a048"/><rect x="54" y="32" width="1" height="6" fill="#00d8d8"/><rect x="55" y="27" width="1" height="11" fill="#00d8d8"/><rect x="56" y="34" width="1" height="4" fill="#00d8d8"/><rect x="56" y="36" width="1" height="2" fill="#d8a048"/><rect x="57" y="20" width="1" height="18" fill="#00d8d8"/><rect x="57" y="37" width="1" height="1" fill="#d8a048"/><rect x="58" y="32" width="1" height="6" fill="#00d8d8"/><rect x="58" y="37" width="1" height="1" fill="#d8a048"/><rect x="61" y="28" width="1" height="10" fill="#00d8d8"/><rect x="66" y="28" width="1" height="10" fill="#00d8d8"/><rect x="66" y="32" width="1" height="6" fill="#d8a048"/><rect x="67" y="28" width="1" height="10" fill="#00d8d8"/><rect x="67" y="37" width="1" height="1" fill="#d8a048"/><rect x="68" y="28" width="1" height="10" fill="#00d8d8"/><rect x="69" y="28" width="1" height="10" fill="#00d8d8"/><rect x="72" y="30" width="1" height="8" fill="#00d8d8"/><rect x="72" y="37" width="1" height="1" fill="#d8a048"/><rect x="73" y="28" width="1" height="10" fill="#00d8d8"/><rect x="74" y="26" width="1" height="12" fill="#00d8d8"/><rect x="74" y="37" width="1" height="1" fill="#d8a048"/><rect x="75" y="29" width="1" height="9" fill="#00d8d8"/><rect x="76" y="30" width="1" height="8" fill="#00d8d8"/><rect x="76" y="37" width="1" height="1" fill="#d8a048"/><rect x="78" y="28" width="1" height="10" fill="#00d8d8"/><rect x="78" y="37" width="1" height="1" fill="#d8a048"/><rect x="81" y="35" width="1" height="3" fill="#00d8d8"/><rect x="82" y="35" width="1" height="3" fill="#00d8d8"/><rect x="82" y="37" width="1" height="1" fill="#d8a048"/><rect x="90" y="36" width="1" height="2" fill="#00d8d8"/><rect x="90" y="37" width="1" height="1" fill="#d8a048"/><rect x="91" y="36" width="1" height="2" fill="#00d8d8"/><rect x="93" y="12" width="1" height="26" fill="#00d8d8"/><rect x="96" y="30" width="1" height="8" fill="#00d8d8"/><rect x="96" y="36" width="1" height="2" fill="#d8a048"/><rect x="98" y="34" width="1" height="4" fill="#00d8d8"/><rect x="99" y="18" width="1" height="20" fill="#00d8d8"/><rect x="99" y="27" width="1" height="11" fill="#d8a048"/><rect x="101" y="12" width="1" height="26" fill="#00d8d8"/><rect x="101" y="27" width="1" height="11" fill="#d8a048"/><rect x="103" y="32" width="1" height="6" fill="#00d8d8"/><rect x="0" y="38" width="105" height="1" fill="#101214"/></svg></div>
<div class="r" style="left:1169px;top:279px;width:105px;height:14px;background:#1c2020;"></div><div class="r" style="left:1169px;top:279px;width:105px;height:14px;background:linear-gradient(90deg,#2e3433 0%,#66716f 6%,#8a9492 50%,#66716f 94%,#2e3433 100%);border-radius:0 0 7px 7px"></div><div class="r" style="left:1169px;top:279px;width:105px;height:1px;background:#3c4240;"></div><div class="r" style="left:1176px;top:279px;width:22px;height:1px;background:#7c8482;"></div><div class="r" style="left:1200px;top:279px;width:22px;height:1px;background:#a8b0ae;"></div><div class="r" style="left:1223px;top:279px;width:22px;height:1px;background:#7c8482;"></div><div class="r" style="left:1246px;top:279px;width:22px;height:1px;background:#a8b0ae;"></div><div class="r" style="left:1169px;top:280px;width:1px;height:6px;background:#c090d8;"></div>
<div class="t" style="left:1204.40px;top:278.69px;font:13.50px/13.50px 'Liberation Serif', serif;color:#fcfaf4;transform:scale(0.9667,1.0000);text-shadow:1px 1px 0 #000,0.5px 0.5px 0 #000;">CPU1</div>
<div class="t" style="left:1172.00px;top:239.33px;font:12.50px/12.50px 'Liberation Serif', serif;color:#f0c888;transform:scale(1.0811,1.0000);text-shadow:1px 1px 0 #000;">0%</div>
<div class="r" style="left:1169px;top:293px;width:105px;height:39px;background:linear-gradient(90deg,#262a33 0%,#3c414a 30%,#555a62 50%,#3c414a 70%,#262a33 100%);overflow:hidden"><svg class="r" style="left:0;top:0" width="105" height="39"><rect x="0" y="0" width="105" height="1" fill="#5a6068"/><rect x="1" y="35" width="1" height="3" fill="#00d8d8"/><rect x="6" y="35" width="1" height="3" fill="#00d8d8"/><rect x="11" y="35" width="1" height="3" fill="#00d8d8"/><rect x="14" y="24" width="1" height="14" fill="#00d8d8"/><rect x="16" y="35" width="1" height="3" fill="#00d8d8"/><rect x="19" y="35" width="1" height="3" fill="#00d8d8"/><rect x="21" y="35" width="1" height="3" fill="#00d8d8"/><rect x="26" y="35" width="1" height="3" fill="#00d8d8"/><rect x="31" y="35" width="1" height="3" fill="#00d8d8"/><rect x="36" y="30" width="1" height="8" fill="#00d8d8"/><rect x="41" y="34" width="1" height="4" fill="#00d8d8"/><rect x="46" y="34" width="1" height="4" fill="#00d8d8"/><rect x="48" y="30" width="1" height="8" fill="#00d8d8"/><rect x="49" y="30" width="1" height="8" fill="#00d8d8"/><rect x="50" y="30" width="1" height="8" fill="#00d8d8"/><rect x="51" y="30" width="1" height="8" fill="#00d8d8"/><rect x="53" y="24" width="1" height="14" fill="#00d8d8"/><rect x="55" y="22" width="1" height="16" fill="#00d8d8"/><rect x="57" y="22" width="1" height="16" fill="#00d8d8"/><rect x="60" y="18" width="1" height="20" fill="#00d8d8"/><rect x="67" y="22" width="1" height="16" fill="#00d8d8"/><rect x="68" y="22" width="1" height="16" fill="#00d8d8"/><rect x="69" y="22" width="1" height="16" fill="#00d8d8"/><rect x="72" y="10" width="1" height="28" fill="#00d8d8"/><rect x="75" y="22" width="1" height="16" fill="#00d8d8"/><rect x="78" y="22" width="1" height="16" fill="#00d8d8"/><rect x="81" y="18" width="1" height="20" fill="#00d8d8"/><rect x="86" y="35" width="1" height="3" fill="#00d8d8"/><rect x="91" y="30" width="1" height="8" fill="#00d8d8"/><rect x="93" y="35" width="1" height="3" fill="#00d8d8"/><rect x="96" y="35" width="1" height="3" fill="#00d8d8"/><rect x="99" y="35" width="1" height="3" fill="#00d8d8"/><rect x="101" y="22" width="1" height="16" fill="#00d8d8"/><path d="M0 35.5 H4 V36.5 H44 V37.5 H54 V30.5 H60 V31.5 H65 V32.5 H75 V33.5 H85 V34.5 H105" fill="none" stroke="#d8a048" stroke-width="1"/><rect x="0" y="38" width="105" height="1" fill="#101214"/></svg></div>
<div class="r" style="left:1169px;top:332px;width:105px;height:14px;background:#1c2020;"></div><div class="r" style="left:1169px;top:332px;width:105px;height:14px;background:linear-gradient(90deg,#2e3433 0%,#66716f 6%,#8a9492 50%,#66716f 94%,#2e3433 100%);border-radius:0 0 7px 7px"></div><div class="r" style="left:1169px;top:332px;width:105px;height:1px;background:#3c4240;"></div><div class="r" style="left:1176px;top:332px;width:22px;height:1px;background:#7c8482;"></div><div class="r" style="left:1200px;top:332px;width:22px;height:1px;background:#a8b0ae;"></div><div class="r" style="left:1223px;top:332px;width:22px;height:1px;background:#7c8482;"></div><div class="r" style="left:1246px;top:332px;width:22px;height:1px;background:#a8b0ae;"></div><div class="r" style="left:1169px;top:333px;width:1px;height:6px;background:#c090d8;"></div>
<div class="t" style="left:1208.00px;top:331.89px;font:13.50px/13.50px 'Liberation Serif', serif;color:#fcfaf4;transform:scale(1.1232,1.0000);text-shadow:1px 1px 0 #000,0.5px 0.5px 0 #000;">Proc</div>
<div class="t" style="left:1171.50px;top:292.53px;font:12.50px/12.50px 'Liberation Serif', serif;color:#f0c888;transform:scale(1.2320,1.0000);text-shadow:1px 1px 0 #000;">152</div>
<div class="t" style="left:1199.70px;top:292.95px;font:12.00px/12.00px 'Liberation Serif', serif;color:#c8e8e8;transform:scale(1.1577,1.0000);text-shadow:1px 1px 0 #000,0.5px 0.5px 0 #000;">procs</div>
<div class="t" style="left:1179.80px;top:305.53px;font:12.50px/12.50px 'Liberation Serif', serif;color:#f0c888;transform:scale(0.8320,1.0000);text-shadow:1px 1px 0 #000;">1</div>
<div class="t" style="left:1192.30px;top:305.95px;font:12.00px/12.00px 'Liberation Serif', serif;color:#c8e8e8;transform:scale(1.1846,1.0000);text-shadow:1px 1px 0 #000,0.5px 0.5px 0 #000;">users</div>
<div class="r" style="left:1169px;top:346px;width:105px;height:17px;background:#2e3432;border-radius:3px"></div>
<div class="r" style="left:1170px;top:347px;width:103px;height:15px;background:linear-gradient(90deg,#5a6a74 0%,#8a9aa4 50%,#6a7a84 100%);border-radius:2px"></div>
<div class="r" style="left:1233px;top:348px;width:39px;height:12px;background:#4e5a5e;"></div>
<div class="t" style="left:1172.40px;top:347.05px;font:12.00px/12.00px 'Liberation Serif', serif;color:#fcf8ec;transform:scale(1.1267,1.0000);text-shadow:1px 1px 0 #000,0.5px 0.5px 0 #000;">temp1</div>
<div class="t" style="left:1234.00px;top:347.00px;font:13.00px/13.00px 'Liberation Sans', sans-serif;color:#50e0d8;transform:scale(1.0519,1.0000);text-shadow:1px 1px 0 #000,0.5px 0.5px 0 #000;">40.0C</div>
<div class="r" style="left:1169px;top:363px;width:105px;height:40px;background:linear-gradient(90deg,#262a33 0%,#3c414a 30%,#555a62 50%,#3c414a 70%,#262a33 100%);overflow:hidden"><svg class="r" style="left:0;top:0" width="105" height="40"><rect x="0" y="0" width="105" height="1" fill="#5a6068"/><rect x="0" y="6" width="105" height="1" fill="#15181c"/><rect x="0" y="7" width="105" height="1" fill="#6a7078"/><rect x="0" y="14" width="105" height="1" fill="#15181c"/><rect x="0" y="15" width="105" height="1" fill="#6a7078"/><rect x="0" y="22" width="105" height="1" fill="#15181c"/><rect x="0" y="23" width="105" height="1" fill="#6a7078"/><rect x="0" y="30" width="105" height="1" fill="#15181c"/><rect x="0" y="31" width="105" height="1" fill="#6a7078"/><rect x="0" y="38" width="105" height="1" fill="#15181c"/><rect x="0" y="39" width="105" height="1" fill="#6a7078"/><rect x="1" y="37" width="1" height="2" fill="#d8a048"/><rect x="4" y="34" width="1" height="5" fill="#d8a048"/><rect x="10" y="25" width="1" height="14" fill="#d8a048"/><rect x="16" y="27" width="1" height="12" fill="#d8a048"/><rect x="26" y="37" width="1" height="2" fill="#d8a048"/><rect x="36" y="30" width="1" height="9" fill="#d8a048"/><rect x="49" y="27" width="1" height="12" fill="#00d8d8"/><rect x="54" y="29" width="1" height="10" fill="#d8a048"/><rect x="60" y="33" width="1" height="6" fill="#d8a048"/><rect x="66" y="30" width="1" height="9" fill="#d8a048"/><rect x="72" y="33" width="1" height="6" fill="#d8a048"/><rect x="77" y="34" width="1" height="5" fill="#d8a048"/><rect x="83" y="36" width="1" height="3" fill="#d8a048"/><rect x="84" y="33" width="1" height="6" fill="#d8a048"/><rect x="88" y="31" width="1" height="8" fill="#d8a048"/><rect x="93" y="2" width="1" height="37" fill="#d8a048"/><rect x="94" y="32" width="1" height="7" fill="#d8a048"/><rect x="95" y="32" width="1" height="7" fill="#d8a048"/><rect x="98" y="32" width="1" height="7" fill="#d8a048"/><rect x="101" y="32" width="1" height="7" fill="#d8a048"/><rect x="0" y="39" width="105" height="1" fill="#101214"/></svg></div>
<div class="r" style="left:1169px;top:404px;width:105px;height:14px;background:#1c2020;"></div><div class="r" style="left:1169px;top:404px;width:105px;height:14px;background:linear-gradient(90deg,#2e3433 0%,#66716f 6%,#8a9492 50%,#66716f 94%,#2e3433 100%);border-radius:0 0 7px 7px"></div><div class="r" style="left:1169px;top:404px;width:105px;height:1px;background:#3c4240;"></div><div class="r" style="left:1176px;top:404px;width:22px;height:1px;background:#7c8482;"></div><div class="r" style="left:1200px;top:404px;width:22px;height:1px;background:#a8b0ae;"></div><div class="r" style="left:1223px;top:404px;width:22px;height:1px;background:#7c8482;"></div><div class="r" style="left:1246px;top:404px;width:22px;height:1px;background:#a8b0ae;"></div><div class="r" style="left:1169px;top:405px;width:1px;height:6px;background:#c090d8;"></div>
<div class="t" style="left:1208.00px;top:404.19px;font:13.50px/13.50px 'Liberation Serif', serif;color:#fcfaf4;transform:scale(1.0353,1.0000);text-shadow:1px 1px 0 #000,0.5px 0.5px 0 #000;">Disk</div>
<div class="t" style="left:1172.00px;top:363.43px;font:12.50px/12.50px 'Liberation Serif', serif;color:#f0c888;transform:scale(0.9600,1.0000);text-shadow:1px 1px 0 #000;">0</div>
<div class="r" style="left:1169px;top:418px;width:105px;height:38px;background:linear-gradient(90deg,#262a33 0%,#3c414a 30%,#555a62 50%,#3c414a 70%,#262a33 100%);overflow:hidden"><svg class="r" style="left:0;top:0" width="105" height="38"><rect x="0" y="0" width="105" height="1" fill="#5a6068"/><rect x="0" y="6" width="105" height="1" fill="#15181c"/><rect x="0" y="7" width="105" height="1" fill="#6a7078"/><rect x="0" y="14" width="105" height="1" fill="#15181c"/><rect x="0" y="15" width="105" height="1" fill="#6a7078"/><rect x="0" y="22" width="105" height="1" fill="#15181c"/><rect x="0" y="23" width="105" height="1" fill="#6a7078"/><rect x="0" y="30" width="105" height="1" fill="#15181c"/><rect x="0" y="31" width="105" height="1" fill="#6a7078"/><rect x="0" y="31" width="1" height="6" fill="#00d8d8"/><rect x="0" y="35" width="1" height="2" fill="#d8a048"/><rect x="1" y="19" width="1" height="18" fill="#00d8d8"/><rect x="1" y="17" width="1" height="20" fill="#d8a048"/><rect x="2" y="10" width="1" height="27" fill="#00d8d8"/><rect x="2" y="23" width="1" height="14" fill="#d8a048"/><rect x="3" y="27" width="1" height="10" fill="#00d8d8"/><rect x="3" y="31" width="1" height="6" fill="#d8a048"/><rect x="14" y="32" width="1" height="5" fill="#00d8d8"/><rect x="15" y="32" width="1" height="5" fill="#00d8d8"/><rect x="16" y="32" width="1" height="5" fill="#00d8d8"/><rect x="18" y="21" width="1" height="16" fill="#00d8d8"/><rect x="19" y="21" width="1" height="16" fill="#00d8d8"/><rect x="20" y="21" width="1" height="16" fill="#00d8d8"/><rect x="21" y="21" width="1" height="16" fill="#00d8d8"/><rect x="22" y="21" width="1" height="16" fill="#00d8d8"/><rect x="23" y="21" width="1" height="16" fill="#00d8d8"/><rect x="24" y="21" width="1" height="16" fill="#00d8d8"/><rect x="25" y="21" width="1" height="16" fill="#00d8d8"/><rect x="26" y="21" width="1" height="16" fill="#00d8d8"/><rect x="27" y="21" width="1" height="16" fill="#00d8d8"/><rect x="19" y="8" width="1" height="29" fill="#00d8d8"/><rect x="21" y="8" width="1" height="29" fill="#00d8d8"/><rect x="23" y="8" width="1" height="29" fill="#00d8d8"/><rect x="32" y="36" width="1" height="1" fill="#00d8d8"/><rect x="36" y="33" width="1" height="4" fill="#00d8d8"/><rect x="48" y="8" width="1" height="29" fill="#00d8d8"/><rect x="48" y="19" width="1" height="18" fill="#d8a048"/><rect x="49" y="17" width="1" height="20" fill="#00d8d8"/><rect x="49" y="25" width="1" height="12" fill="#d8a048"/><rect x="50" y="29" width="1" height="8" fill="#00d8d8"/><rect x="50" y="31" width="1" height="6" fill="#d8a048"/><rect x="51" y="33" width="1" height="4" fill="#00d8d8"/><rect x="51" y="34" width="1" height="3" fill="#d8a048"/><rect x="52" y="31" width="1" height="6" fill="#00d8d8"/><rect x="52" y="35" width="1" height="2" fill="#d8a048"/><rect x="53" y="34" width="1" height="3" fill="#00d8d8"/><rect x="53" y="34" width="1" height="3" fill="#d8a048"/><rect x="55" y="29" width="1" height="8" fill="#00d8d8"/><rect x="55" y="33" width="1" height="4" fill="#d8a048"/><rect x="56" y="35" width="1" height="2" fill="#00d8d8"/><rect x="56" y="35" width="1" height="2" fill="#d8a048"/><rect x="58" y="33" width="1" height="4" fill="#00d8d8"/><rect x="58" y="34" width="1" height="3" fill="#d8a048"/><rect x="60" y="31" width="1" height="6" fill="#00d8d8"/><rect x="60" y="35" width="1" height="2" fill="#d8a048"/><rect x="62" y="34" width="1" height="3" fill="#00d8d8"/><rect x="62" y="34" width="1" height="3" fill="#d8a048"/><rect x="64" y="32" width="1" height="5" fill="#00d8d8"/><rect x="66" y="33" width="1" height="4" fill="#00d8d8"/><rect x="66" y="35" width="1" height="2" fill="#d8a048"/><rect x="67" y="34" width="1" height="3" fill="#00d8d8"/><rect x="67" y="36" width="1" height="1" fill="#d8a048"/><rect x="69" y="30" width="1" height="7" fill="#00d8d8"/><rect x="69" y="34" width="1" height="3" fill="#d8a048"/><rect x="71" y="33" width="1" height="4" fill="#00d8d8"/><rect x="71" y="33" width="1" height="4" fill="#d8a048"/><rect x="73" y="27" width="1" height="10" fill="#00d8d8"/><rect x="73" y="31" width="1" height="6" fill="#d8a048"/><rect x="74" y="31" width="1" height="6" fill="#00d8d8"/><rect x="74" y="33" width="1" height="4" fill="#d8a048"/><rect x="76" y="34" width="1" height="3" fill="#00d8d8"/><rect x="76" y="35" width="1" height="2" fill="#d8a048"/><rect x="78" y="33" width="1" height="4" fill="#00d8d8"/><rect x="80" y="33" width="1" height="4" fill="#00d8d8"/><rect x="80" y="34" width="1" height="3" fill="#d8a048"/><rect x="82" y="32" width="1" height="5" fill="#00d8d8"/><rect x="82" y="35" width="1" height="2" fill="#d8a048"/><rect x="84" y="-1" width="1" height="38" fill="#00d8d8"/><rect x="84" y="13" width="1" height="24" fill="#d8a048"/><rect x="85" y="31" width="1" height="6" fill="#00d8d8"/><rect x="85" y="33" width="1" height="4" fill="#d8a048"/><rect x="88" y="36" width="1" height="1" fill="#00d8d8"/><rect x="0" y="37" width="105" height="1" fill="#101214"/></svg></div>
<div class="t" style="left:1172.00px;top:417.53px;font:12.50px/12.50px 'Liberation Serif', serif;color:#f0c888;transform:scale(0.9600,1.0000);text-shadow:1px 1px 0 #000;">0</div>
<div class="r" style="left:1169px;top:457px;width:105px;height:14px;background:linear-gradient(90deg,#2e3433 0%,#66716f 6%,#8a9492 50%,#66716f 94%,#2e3433 100%);"></div>
<div class="r" style="left:1169px;top:457px;width:105px;height:1px;background:#4a5250;"></div>
<div class="r" style="left:1176px;top:457px;width:22px;height:1px;background:#7c8482;"></div><div class="r" style="left:1200px;top:457px;width:22px;height:1px;background:#a8b0ae;"></div><div class="r" style="left:1223px;top:457px;width:22px;height:1px;background:#7c8482;"></div><div class="r" style="left:1246px;top:457px;width:22px;height:1px;background:#a8b0ae;"></div>
<div class="r" style="left:1172px;top:463px;width:10px;height:3px;background:#3a3e3d;"></div>
<div class="r" style="left:1261px;top:463px;width:10px;height:3px;background:#3a3e3d;"></div>
<div class="r" style="left:1169px;top:458px;width:1px;height:6px;background:#c090d8;"></div>
<div class="t" style="left:1202.50px;top:458.09px;font:13.50px/13.50px 'Liberation Serif', serif;color:#fcfaf4;transform:scale(1.1061,1.0000);text-shadow:1px 1px 0 #000,0.5px 0.5px 0 #000;">wlan0</div>
<div class="r" style="left:1169px;top:471px;width:105px;height:16px;background:linear-gradient(90deg,#2e3433 0%,#66716f 6%,#8a9492 50%,#66716f 94%,#2e3433 100%);"></div>
<div class="r" style="left:1169px;top:471px;width:105px;height:1px;background:#4a5250;"></div>
<div class="r" style="left:1176px;top:471px;width:22px;height:1px;background:#7c8482;"></div><div class="r" style="left:1200px;top:471px;width:22px;height:1px;background:#a8b0ae;"></div><div class="r" style="left:1223px;top:471px;width:22px;height:1px;background:#7c8482;"></div><div class="r" style="left:1246px;top:471px;width:22px;height:1px;background:#a8b0ae;"></div>
<div class="r" style="left:1172px;top:477px;width:10px;height:3px;background:#3a3e3d;"></div>
<div class="r" style="left:1261px;top:477px;width:10px;height:3px;background:#3a3e3d;"></div>
<div class="r" style="left:1169px;top:472px;width:1px;height:6px;background:#c090d8;"></div>
<div class="t" style="left:1206.20px;top:471.99px;font:13.50px/13.50px 'Liberation Serif', serif;color:#fcfaf4;transform:scale(1.1481,1.0000);text-shadow:1px 1px 0 #000,0.5px 0.5px 0 #000;">ppp0</div>
<div class="r" style="left:1169px;top:487px;width:105px;height:17px;background:linear-gradient(90deg,#3a403f 0%,#5a6462 20%,#6a7472 80%,#3a403f 100%);border-radius:0 0 3px 3px"></div>
<div class="r" style="left:1171px;top:488px;width:69px;height:14px;background:linear-gradient(90deg,#4e5858 0%,#6c7c7c 10%,#889898 50%,#6c7c7c 90%,#4e5858 100%);"></div>
<div class="t" style="left:1191.00px;top:488.61px;font:13.00px/13.00px 'Liberation Serif', serif;color:#e8dcc0;transform:scale(1.1602,1.0000);text-shadow:1px 1px 0 #000,0.5px 0.5px 0 #000;">0:00</div>
<div class="t" style="left:1225.60px;top:488.61px;font:13.00px/13.00px 'Liberation Serif', serif;color:#e8dcc0;transform:scale(1.0308,1.0000);text-shadow:1px 1px 0 #000,0.5px 0.5px 0 #000;">00</div>
<div class="r" style="left:1260px;top:491px;width:13px;height:8px;background:linear-gradient(#a8b0b4,#5a6266);border:1px solid #c8d0d4;border-right-color:#404848;border-bottom-color:#404848;box-sizing:border-box"></div>
<div class="r" style="left:1263px;top:494px;width:7px;height:2px;background:#c0a0e0;"></div>
<div class="r" style="left:1169px;top:504px;width:105px;height:34px;background:#3e4644;"></div>
<div class="r" style="left:1170px;top:505px;width:102px;height:27px;background:linear-gradient(90deg,#4e5858 0%,#6c7c7c 10%,#889898 50%,#6c7c7c 90%,#4e5858 100%);border-radius:2px"></div>
<div class="t" style="left:1206.20px;top:505.31px;font:13.00px/13.00px 'Liberation Serif', serif;color:#d8f0f0;transform:scale(1.1148,1.0000);text-shadow:1px 1px 0 #000,0.5px 0.5px 0 #000;">Mem</div>
<div class="r" style="left:1179px;top:519px;width:15px;height:1px;background:#202428;"></div>
<div class="r" style="left:1194px;top:520px;width:13px;height:1px;background:#e0e0e0;"></div>
<div class="r" style="left:1207px;top:519px;width:15px;height:1px;background:#202428;"></div>
<div class="r" style="left:1222px;top:520px;width:15px;height:1px;background:#e0e0e0;"></div>
<div class="r" style="left:1237px;top:519px;width:13px;height:1px;background:#202428;"></div>
<div class="r" style="left:1250px;top:520px;width:15px;height:1px;background:#e0e0e0;"></div>
<div class="t" style="left:1206.00px;top:521.41px;font:13.00px/13.00px 'Liberation Serif', serif;color:#d8f0f0;transform:scale(1.1003,1.0000);text-shadow:1px 1px 0 #000,0.5px 0.5px 0 #000;">Swap</div>
<div class="r" style="left:1172px;top:505px;width:2px;height:10px;background:#f0f0f0;"></div>
<div class="r" style="left:1170px;top:505px;width:6px;height:1px;background:#f0f0f0;"></div>
<div class="r" style="left:1170px;top:520px;width:1px;height:6px;background:#c090d8;"></div>
<div class="r" style="left:1171px;top:524px;width:2px;height:10px;background:#f0f0f0;"></div>
<div class="r" style="left:1170px;top:534px;width:6px;height:1px;background:#f0f0f0;"></div>
<div class="r" style="left:1169px;top:537px;width:105px;height:17px;background:#2e3432;border-radius:2px"></div>
<div class="r" style="left:1170px;top:538px;width:103px;height:14px;background:linear-gradient(90deg,#4e5858 0%,#6c7c7c 10%,#889898 50%,#6c7c7c 90%,#4e5858 100%);border-radius:2px"></div>
<svg class="r" style="left:1171px;top:540px" width="22" height="11"><rect x=".5" y=".5" width="21" height="10" fill="#dcd8bc" stroke="#606050"/><path d="M1.5 1.5 L11 6.5 L20.5 1.5" fill="none" stroke="#222" stroke-width="1"/></svg>
<div class="t" style="left:1236.80px;top:538.65px;font:12.00px/12.00px 'Liberation Serif', serif;color:#e0e8f0;transform:scale(1.0749,1.0000);text-shadow:1px 1px 0 #000,0.5px 0.5px 0 #000;">-/-</div>
<div class="r" style="left:1163px;top:555px;width:117px;height:13px;background:linear-gradient(90deg,#5a6462 0%,#7a8482 6%,#8a9492 50%,#7a8482 94%,#5a6462 100%);"></div>
<div class="r" style="left:1163px;top:567px;width:117px;height:1px;background:#8a9592;"></div>
<div class="t" style="left:1193.70px;top:554.21px;font:13.00px/13.00px 'Liberation Serif', serif;color:#fcf8ec;transform:scale(1.2061,1.0000);text-shadow:1px 1px 0 #000,0.5px 0.5px 0 #000;">1d 16:30</div>
<div class="r" style="left:0px;top:775px;width:1280px;height:25px;background:#000;"></div>
<div class="r" style="left:2px;top:777px;width:21px;height:21px;background:linear-gradient(135deg,#a6a6a6 0%,#5e5e5e 100%);"></div>
<svg class="r" style="left:2px;top:777px" width="21" height="21"><path d="M7.5 10.5 L15 6.5 V14.5Z" fill="#000"/></svg>
<div class="r" style="left:24px;top:777px;width:112px;height:21px;background:linear-gradient(to top right,#101a24 0%,#26343e 50%,#44555e 100%);"></div>
<div class="t" style="left:25.20px;top:780.25px;font:16.50px/16.50px 'Liberation Mono', monospace;color:#f4f4f4;">Workspace 1</div>
<div class="r" style="left:137px;top:777px;width:21px;height:21px;background:linear-gradient(135deg,#a6a6a6 0%,#5e5e5e 100%);"></div>
<svg class="r" style="left:137px;top:777px" width="21" height="21"><path d="M14 10.5 L6.5 6.5 V14.5Z" fill="#000"/></svg>
<div class="r" style="left:160px;top:778px;width:256px;height:19px;background:linear-gradient(to top right,#101a24 0%,#26343e 50%,#44555e 100%);"></div>
<div class="r" style="left:417px;top:778px;width:255px;height:19px;background:linear-gradient(to top right,#101a24 0%,#26343e 50%,#44555e 100%);"></div>
<div class="r" style="left:673px;top:778px;width:255px;height:19px;background:linear-gradient(to top right,#101a24 0%,#26343e 50%,#44555e 100%);"></div>
<div class="r" style="left:929px;top:778px;width:255px;height:19px;background:linear-gradient(to top right,#101a24 0%,#26343e 50%,#44555e 100%);"></div>
<svg class="r" style="left:163px;top:779px" width="14" height="16" viewBox="0 0 14 16"><path d="M2.5 15.5 C1.5 11 1.2 6 3 3.5 C4.5 1.5 9.5 1.2 11.3 3.3 C13 5.5 12.8 10 13.5 15.5 Z" fill="#a56fc8" stroke="#6a3090" stroke-width=".9"/><rect x="4" y="0" width="3" height="1.5" fill="#7a3aa0"/><ellipse cx="5" cy="7" rx="2.2" ry="2.4" fill="#fff"/><ellipse cx="9.2" cy="7" rx="2.2" ry="2.4" fill="#fff"/><circle cx="5.4" cy="7.4" r=".9" fill="#3a2a4a"/><circle cx="8.8" cy="7.4" r=".9" fill="#3a2a4a"/><path d="M4.5 10 L11 9.3 L8 12.5Z" fill="#f5a020" stroke="#d07000" stroke-width=".4"/></svg>
<div class="t" style="left:185.00px;top:780.50px;font:13.00px/13.00px 'Liberation Sans', sans-serif;color:#eeeeee;transform:scale(1.1120,1.0000);">Buddy List</div>
<div class="r" style="left:418px;top:779px;width:17px;height:17px;border-radius:50%;box-sizing:border-box;border:1px solid #4e9a06;background:radial-gradient(circle at 35% 30%,#f4fde8 0%,#b8ec7c 35%,#8ad554 75%,#73c23c 100%)"></div>
<div class="t" style="left:441.80px;top:780.50px;font:13.00px/13.00px 'Liberation Sans', sans-serif;color:#eeeeee;transform:scale(1.0895,1.0000);">John Maguire</div>
<div class="r" style="left:675px;top:779px;width:16px;height:16px;background:linear-gradient(135deg,#9aa8b8,#5a6878);border:1px solid #303030;box-sizing:border-box"></div>
<div class="r" style="left:677px;top:783px;width:3px;height:9px;background:#e0e0e0;"></div>
<div class="r" style="left:685px;top:786px;width:3px;height:3px;background:#80ff20;border-radius:50%"></div>
<div class="t" style="left:698.40px;top:780.50px;font:13.00px/13.00px 'Liberation Sans', sans-serif;color:#eeeeee;transform:scale(1.1957,1.0000);">gkrellm</div>
<div class="t" style="left:936.50px;top:780.60px;font:13.00px/13.00px 'Liberation Sans', sans-serif;color:#eeeeee;transform:scale(1.1716,1.0000);">chris@failbox:~</div>
<div class="r" style="left:1186px;top:777px;width:21px;height:21px;background:linear-gradient(to top right,#101a24 0%,#26343e 50%,#44555e 100%);"></div>
<svg class="r" style="left:1186px;top:777px" width="21" height="21"><defs><radialGradient id="sm" cx="40%" cy="35%" r="60%"><stop offset="0" stop-color="#fff8a0"/><stop offset=".6" stop-color="#f0c818"/><stop offset="1" stop-color="#e08010"/></radialGradient></defs><path d="M1.5 .5 h14 v10 h-9 l-3.5 4 v-4 h-1.5z" fill="#e4ecf8" stroke="#5a88c8" stroke-width="1"/><circle cx="13.5" cy="14" r="6" fill="url(#sm)" stroke="#d86a10" stroke-width="1"/><ellipse cx="11.6" cy="12.6" rx="1.5" ry="1.2" fill="#fff"/><ellipse cx="15.4" cy="12.6" rx="1.5" ry="1.2" fill="#fff"/><rect x="11" y="12" width="1.2" height="1.2" fill="#333"/><rect x="14.8" y="12" width="1.2" height="1.2" fill="#333"/><path d="M10.5 15.5 Q13.5 18 16.5 15.5" fill="none" stroke="#c06000" stroke-width=".9"/></svg>
<div class="r" style="left:1208px;top:777px;width:70px;height:21px;background:linear-gradient(to top right,#101a24 0%,#26343e 50%,#44555e 100%);"></div>
<div class="t" style="left:1210.50px;top:780.74px;font:16.00px/16.00px 'Liberation Mono', monospace;color:#f4f4f4;transform:scale(0.9750,1.0000);">16:05</div>
</body></html>
